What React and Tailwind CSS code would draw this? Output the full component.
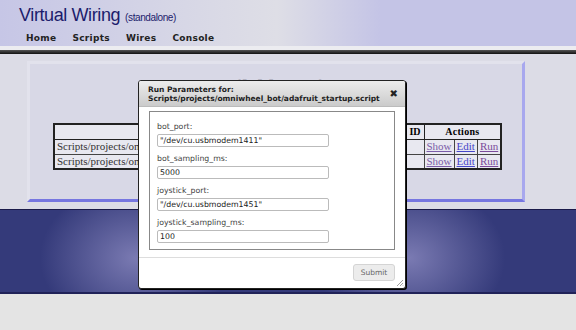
export default function App() {
  const fields = [
    { name: "bot_port", value: '"/dev/cu.usbmodem1411"' },
    { name: "bot_sampling_ms", value: "5000" },
    { name: "joystick_port", value: '"/dev/cu.usbmodem1451"' },
    { name: "joystick_sampling_ms", value: "100" },
  ];

  const rows = ["Scripts/projects/omniwheel_bot/adafruit_startup.script", "Scripts/projects/omniwheel_bot/joystick_drive.script"];

  return (
    <div className="relative w-[576px] h-[330px] overflow-hidden bg-[#e4e4e4] font-['Liberation_Sans',sans-serif]">
      {/* header */}
      <div className="h-[46px] bg-[linear-gradient(to_right,#c6c6e6_0%,#d6d6e6_30%,#dedee6_48%,#c4c4e6_66%,#c4c4e6_100%)] px-[19px] pt-[4px]">
        <div className="flex items-baseline text-[#1c1c6c]">
          <span className="text-[18px] tracking-[-0.4px] leading-[22px]">Virtual Wiring</span>
          <span className="ml-[5px] text-[10px] tracking-[-0.4px]">(standalone)</span>
        </div>
        <nav className="flex gap-[16px] pl-[7px] mt-[6px] font-['DejaVu_Sans',sans-serif] text-[9px] font-bold tracking-[0.3px] text-[#222]">
          <span>Home</span>
          <span>Scripts</span>
          <span>Wires</span>
          <span>Console</span>
        </nav>
      </div>
      <div className="h-[4px] bg-[#ececf0]" />
      <div className="h-[4px] bg-[linear-gradient(#555,#111)]" />

      {/* body */}
      <div className="h-[155px] bg-[#dcdce6] pt-[7px] pl-[27px]">
        <div className="w-[498px] h-[141px] bg-[#d8d8e6] border-l-[3px] border-t-[3px] border-l-[#e2e2ec] border-t-[#e2e2ec] border-r-[3px] border-r-[#a8a8ee] border-b-[3px] border-b-[#7676e0]">
          <div className="text-center font-['Liberation_Serif',serif] font-bold text-[20px] leading-[24px] pt-[11px] text-[#b2b2c0]">
            Available Scripts
          </div>
          <table className="ml-[23px] mt-[24px] border-collapse border-2 border-[#222] font-['Liberation_Serif',serif] text-[11px] leading-[13px] bg-[#e8e8f0]">
            <thead>
              <tr className="h-[15px]">
                <th className="w-[352px] border border-[#222]"></th>
                <th className="w-[18px] border border-[#222] text-[10px]">ID</th>
                <th colSpan={3} className="border border-[#222] text-[10px] tracking-[0.3px]">Actions</th>
              </tr>
            </thead>
            <tbody>
              {rows.map((r) => (
                <tr key={r} className="h-[15px]">
                  <td className="border border-[#444] px-[2px] text-[#333]">
                    <div className="w-[82px] overflow-hidden whitespace-nowrap">{r}</div>
                  </td>
                  <td className="border border-[#444]"></td>
                  <td className="border border-[#444] px-[2px] underline text-[#7a5ca8]">Show</td>
                  <td className="border border-[#444] px-[2px] underline text-[#4646c8]">Edit</td>
                  <td className="border border-[#444] px-[2px] underline text-[#7a4a9a]">Run</td>
                </tr>
              ))}
            </tbody>
          </table>
        </div>
      </div>

      {/* band */}
      <div className="h-[85px] border-t border-t-[#1a1a4a] border-b-[2px] border-b-[#202258] bg-[#343a7a] bg-[radial-gradient(ellipse_95px_75px_at_135px_48px,#7a7ab2_0%,rgba(52,58,122,0)_100%),radial-gradient(ellipse_95px_75px_at_410px_48px,#7a7ab2_0%,rgba(52,58,122,0)_100%)]" />

      {/* dialog */}
      <div className="absolute left-[138px] top-[80px] w-[268px] h-[209px] bg-white border border-[#222] rounded-[3px] flex flex-col font-['DejaVu_Sans',sans-serif] shadow-[1px_1px_0_#000]">
        <div className="h-[26px] flex items-center justify-between pl-[9px] pr-[7px] bg-[linear-gradient(#ececec,#cbcbcb)] border-b border-[#bbb] rounded-t-[2px]">
          <div className="text-[7.5px] font-bold leading-[9px] text-[#222]">
            <div>Run Parameters for:</div>
            <div>Scripts/projects/omniwheel_bot/adafruit_startup.script</div>
          </div>
          <span className="text-[10px] font-bold text-[#222] leading-none">✖</span>
        </div>
        <div className="mx-[10px] mt-[4px] h-[139px] border border-[#888] pl-[7px] pt-[10px]">
          {fields.map((f) => (
            <div key={f.name} className="mb-[7px]">
              <div className="text-[7.8px] leading-[10px] text-[#444]">{f.name}:</div>
              <div className="mt-[2px] w-[172px] h-[13px] border border-[#bbb] rounded-[2px] px-[2px] text-[7.8px] leading-[11px] text-[#222]">
                {f.value}
              </div>
            </div>
          ))}
        </div>
        <div className="mt-[7px] border-t border-[#ddd] flex justify-end pr-[10px] pt-[6px]">
          <button className="w-[42px] h-[17px] rounded-[3px] border border-[#d4d4d4] bg-[#ececec] text-[7.5px] text-[#666]">
            Submit
          </button>
        </div>
        <svg className="absolute right-[1px] bottom-[1px]" width="8" height="8" viewBox="0 0 8 8">
          <path d="M7 1L1 7M7 4L4 7M7 6.5L6.5 7" stroke="#888" strokeWidth="0.8" />
        </svg>
      </div>
    </div>
  );
}
